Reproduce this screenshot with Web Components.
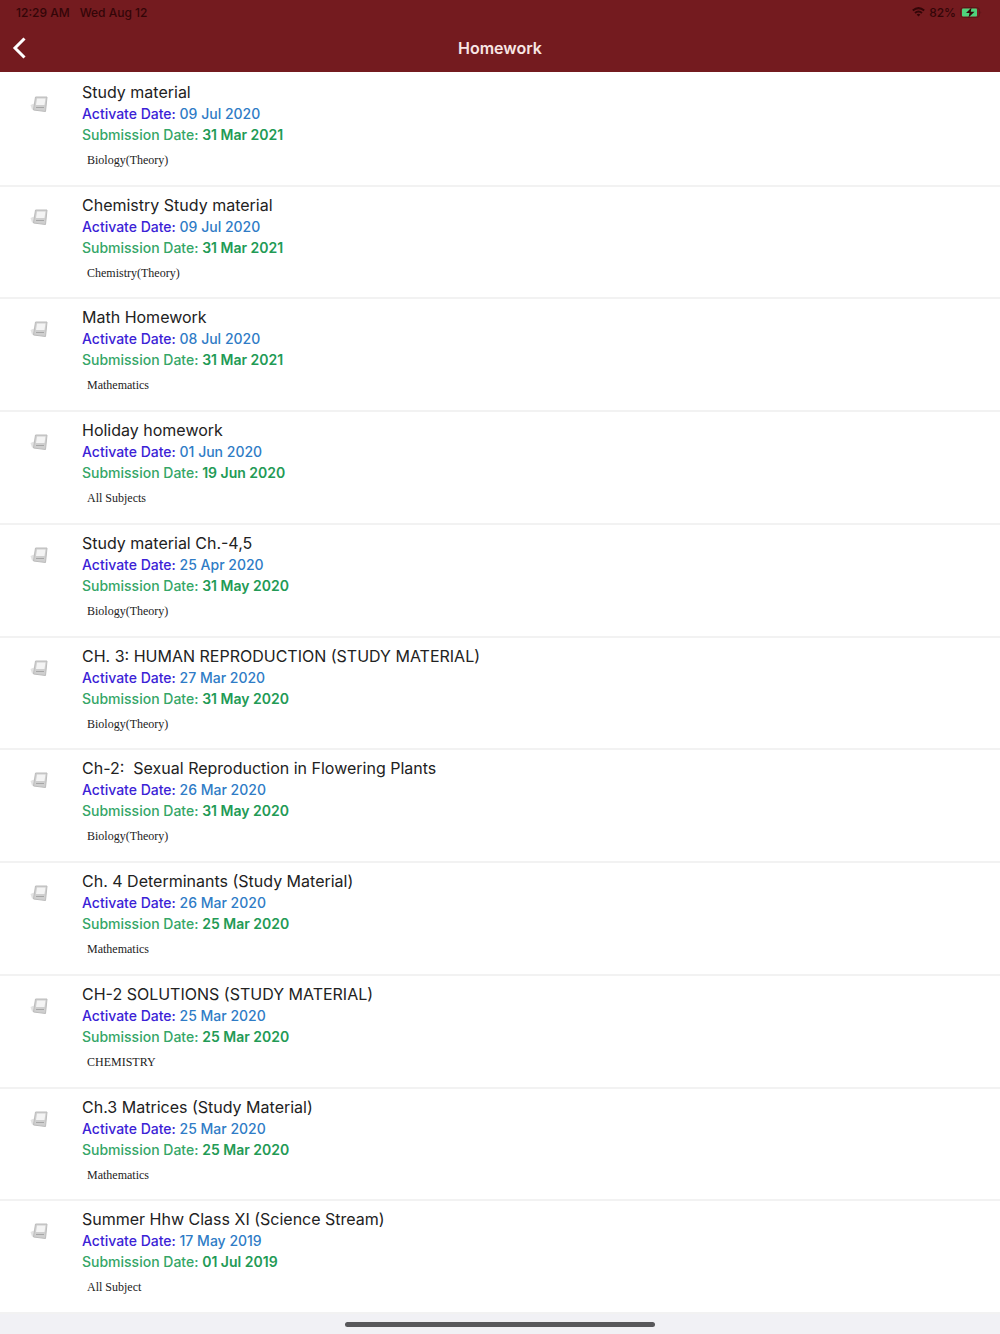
<!DOCTYPE html>
<html lang="en">
  <head>
    <meta charset="UTF-8" />
    <meta name="viewport" content="width=device-width, initial-scale=1" />
    <title>Homework</title>
    <style>
      body {
        margin: 0;
        font-family: Inter, 'Liberation Sans', sans-serif;
        background-color: #f1f1f5;
      }
    </style>
  </head>
  <body>
    <homework-app></homework-app>

    <template id="status-bar-template">
      <style>
        :host {
          display: flex;
          align-items: center;
          justify-content: space-between;
          height: 24px;
          padding: 0 18px 0 16px;
          color: #330608;
          font-size: 12px;
          font-weight: 500;
        }
        div {
          display: flex;
          align-items: center;
          gap: 10px;
        }
        .right {
          gap: 4px;
        }
      </style>
      <div>
        <span>12:29 AM</span>
        <span>Wed Aug 12</span>
      </div>
      <div class="right">
        <svg width="13" height="10" viewBox="0 0 13 10" fill="none" stroke="#330608" stroke-width="2">
          <path d="M0.8 3.6 Q6.5 -1.4 12.2 3.6" />
          <path d="M3 6 Q6.5 3 10 6" />
          <path d="M4.6 7.4 Q6.5 6 8.4 7.4 L6.5 9.6 Z" fill="#330608" stroke="none" />
        </svg>
        <span>82%</span>
        <svg width="22" height="11" viewBox="0 0 22 11">
          <rect x="0.5" y="0.5" width="19" height="10" rx="3" fill="none" stroke="#5a1518" />
          <rect x="2" y="1.5" width="15" height="8" rx="1" fill="#4fd37c" />
          <path d="M20.5 4 Q22 5.5 20.5 7 Z" fill="#5a1518" />
          <path d="M11.5 0.5 L6 6 H9.5 L8.5 10.5 L14.5 4.8 H10.8 Z" fill="#330608" />
        </svg>
      </div>
    </template>

    <template id="nav-bar-template">
      <style>
        :host {
          display: grid;
          grid-template-columns: 40px 1fr 40px;
          align-items: center;
          height: 48px;
          color: #fff;
        }
        button {
          display: flex;
          align-items: center;
          height: 40px;
          padding: 0 0 0 12px;
          border: 0;
          background: none;
        }
        h1 {
          margin: 0;
          font-size: 16px;
          line-height: 20px;
          font-weight: 600;
          text-align: center;
          color: #f8e6e4;
        }
      </style>
      <button type="button" aria-label="Back">
        <svg width="14" height="22" viewBox="0 0 14 22" fill="none" stroke="#fff" stroke-width="3">
          <path d="M12.5 1.5 L3 11 L12.5 20.5" />
        </svg>
      </button>
      <h1><slot></slot></h1>
    </template>

    <template id="homework-item-template">
      <style>
        :host {
          display: grid;
          grid-template-columns: 52px 1fr;
          box-sizing: border-box;
          padding: 7px 16px 8px 30px;
          border-bottom: 2px solid #f2f2f2;
          background-color: #fff;
        }
        svg {
          margin-top: 15px;
        }
        h2,
        p {
          margin: 0;
        }
        h2 {
          font-size: 16px;
          line-height: 22px;
          font-weight: 400;
          color: #222;
          white-space: pre-wrap;
        }
        p {
          font-size: 14px;
          line-height: 21px;
          font-weight: 500;
        }
        .activate {
          color: #3b22d6;
        }
        .activate time {
          color: #2f7cc6;
        }
        .submission {
          color: #35a667;
        }
        .submission time {
          color: #229a55;
          font-weight: 600;
        }
        .subject {
          padding: 5px 0 0 5px;
          font-family: 'Liberation Serif', serif;
          font-size: 12px;
          font-weight: 400;
          color: #222;
        }
      </style>
      <svg width="18" height="17" viewBox="0 0 18 17" aria-hidden="true">
        <path d="M0.5 9 L5 7 V14 L2 13.5 Z" fill="#e3e3e3" />
        <path d="M5.5 1 H17 L15.5 15.5 L3.5 14 Z" fill="#cfcfcf" stroke="#bcbcbc" />
        <path d="M7 2.5 H15.5 L14.5 9 H6 Z" fill="#f4f4f4" />
        <path d="M6 11.5 H14" stroke="#a6a6a6" />
      </svg>
      <div>
        <h2><slot></slot></h2>
        <p class="activate">Activate Date: <time id="activate"></time></p>
        <p class="submission">Submission Date: <time id="submission"></time></p>
        <p class="subject" id="subject"></p>
      </div>
    </template>

    <template id="homework-app-template">
      <style>
        :host {
          display: flex;
          flex-direction: column;
          min-height: 100vh;
        }
        header {
          background-color: #741b1f;
        }
        main {
          flex: 1;
          display: grid;
          grid-auto-rows: 1fr;
          padding-top: 2px;
          background-color: #fff;
        }
        footer {
          display: flex;
          align-items: center;
          justify-content: center;
          height: 20px;
        }
        .indicator {
          width: 31%;
          height: 5px;
          border-radius: 3px;
          background-color: #58585b;
        }
      </style>
      <header>
        <status-bar></status-bar>
        <nav-bar>Homework</nav-bar>
      </header>
      <main role="list"></main>
      <footer><div class="indicator"></div></footer>
    </template>

    <script>
      const homework = [
        ['Study material', '09 Jul 2020', '31 Mar 2021', 'Biology(Theory)'],
        ['Chemistry Study material', '09 Jul 2020', '31 Mar 2021', 'Chemistry(Theory)'],
        ['Math Homework', '08 Jul 2020', '31 Mar 2021', 'Mathematics'],
        ['Holiday homework', '01 Jun 2020', '19 Jun 2020', 'All Subjects'],
        ['Study material Ch.-4,5', '25 Apr 2020', '31 May 2020', 'Biology(Theory)'],
        ['CH. 3: HUMAN REPRODUCTION (STUDY MATERIAL)', '27 Mar 2020', '31 May 2020', 'Biology(Theory)'],
        ['Ch-2:  Sexual Reproduction in Flowering Plants', '26 Mar 2020', '31 May 2020', 'Biology(Theory)'],
        ['Ch. 4 Determinants (Study Material)', '26 Mar 2020', '25 Mar 2020', 'Mathematics'],
        ['CH-2 SOLUTIONS (STUDY MATERIAL)', '25 Mar 2020', '25 Mar 2020', 'CHEMISTRY'],
        ['Ch.3 Matrices (Study Material)', '25 Mar 2020', '25 Mar 2020', 'Mathematics'],
        ['Summer Hhw Class XI (Science Stream)', '17 May 2019', '01 Jul 2019', 'All Subject'],
      ];

      // Attaches a shadow root filled from the template with the given id
      class TemplateElement extends HTMLElement {
        constructor(templateId) {
          super();
          const template = document.getElementById(templateId);
          this.attachShadow({ mode: 'open' });
          this.shadowRoot.appendChild(template.content.cloneNode(true));
        }
      }

      class StatusBar extends TemplateElement {
        constructor() {
          super('status-bar-template');
        }
      }

      class NavBar extends TemplateElement {
        constructor() {
          super('nav-bar-template');
        }
      }

      class HomeworkItem extends TemplateElement {
        constructor() {
          super('homework-item-template');
        }

        connectedCallback() {
          for (const name of ['activate', 'submission', 'subject']) {
            this.shadowRoot.getElementById(name).textContent = this.getAttribute(name);
          }
        }
      }

      class HomeworkApp extends TemplateElement {
        constructor() {
          super('homework-app-template');
        }

        connectedCallback() {
          const list = this.shadowRoot.querySelector('main');
          for (const [title, activate, submission, subject] of homework) {
            const item = document.createElement('homework-item');
            item.setAttribute('role', 'listitem');
            item.setAttribute('activate', activate);
            item.setAttribute('submission', submission);
            item.setAttribute('subject', subject);
            item.textContent = title;
            list.appendChild(item);
          }
        }
      }

      customElements.define('status-bar', StatusBar);
      customElements.define('nav-bar', NavBar);
      customElements.define('homework-item', HomeworkItem);
      customElements.define('homework-app', HomeworkApp);
    </script>
  </body>
</html>
